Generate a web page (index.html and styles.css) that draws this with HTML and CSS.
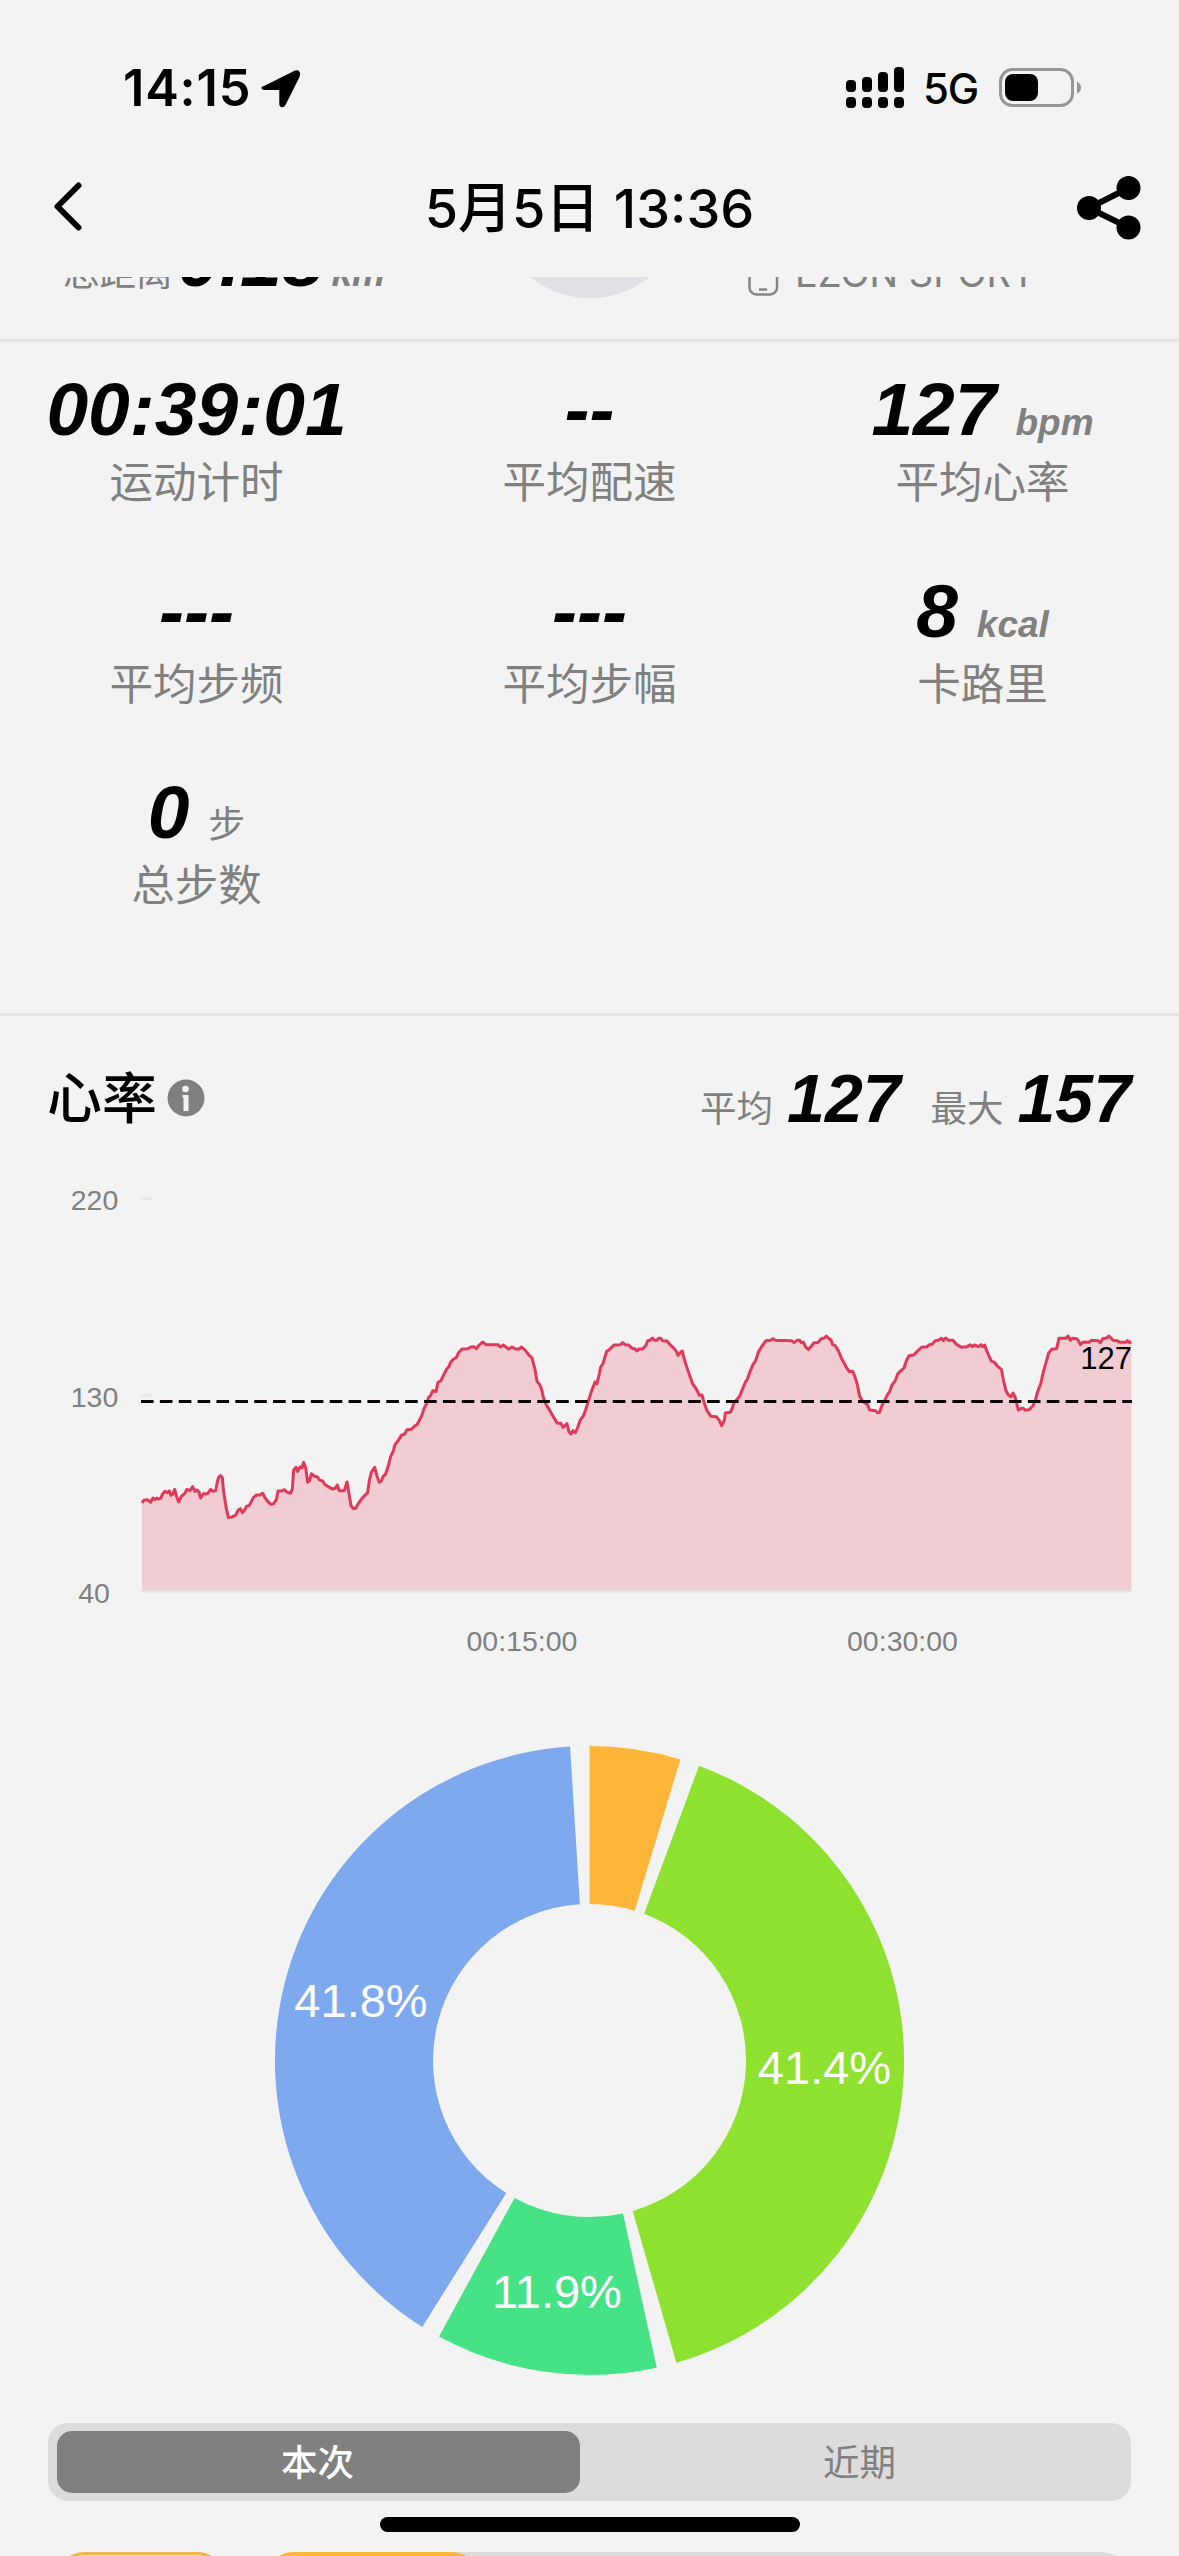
FILE: index.html
```html
<!DOCTYPE html>
<html lang="zh-CN">
<head>
<meta charset="utf-8">
<title>5月5日 13:36</title>
<link rel="stylesheet" href="styles.css">
</head>
<body>
<header class="status-bar">
  <span class="clock">14:15</span>
  <svg class="location" width="40" height="40" viewBox="0 0 40 40"><path d="M4 16.500 L34 1.500 Q38.800 0 39 5 Q39 7 38 9 L24.500 36 Q22.500 39.500 19.500 37.800 Q18.300 37 18.300 35 V21 H4 Q.5 21 .3 18.500 Q.3 17.500 4 16.500Z"/></svg>
  <svg class="signal" width="58" height="42" viewBox="0 0 58 42">
    <rect x="0" y="13" width="10" height="12" rx="4"/><rect x="16" y="10" width="10" height="15" rx="4"/><rect x="32" y="5" width="10" height="20" rx="4"/><rect x="48" y="0" width="10" height="25" rx="4"/>
    <rect x="0" y="30" width="10" height="11" rx="4"/><rect x="16" y="30" width="10" height="11" rx="4"/><rect x="32" y="30" width="10" height="11" rx="4"/><rect x="48" y="30" width="10" height="11" rx="4"/>
  </svg>
  <span class="network">5G</span>
  <svg class="battery" width="83" height="40" viewBox="0 0 83 40">
    <rect x="1.500" y="1.500" width="72" height="36" rx="12" fill="none" stroke="#969696" stroke-width="3"/>
    <rect x="6" y="6" width="33" height="27" rx="8"/>
    <path d="M78 13.500 Q82 15.500 82 19.500 T78 25.500Z" fill="#969696"/>
  </svg>
</header>
<nav class="nav-bar">
  <svg class="back" width="30" height="52" viewBox="0 0 30 52"><path d="M25.500 4.500 L4.500 25.500 L25.500 46.500" fill="none" stroke="#000" stroke-width="6" stroke-linecap="round" stroke-linejoin="round"/></svg>
  <h1 class="nav-title">5月5日 13:36</h1>
  <svg class="share" width="64" height="64" viewBox="0 0 64 64"><path d="M51.500 12 L12 32 L51.500 51.500" fill="none" stroke="#000" stroke-width="6"/><circle cx="12" cy="32" r="12"/><circle cx="51.500" cy="12" r="12"/><circle cx="51.500" cy="51.500" r="12"/></svg>
</nav>
<main class="content">
  <section class="summary">
    <div class="distance"><span class="cjk">总距离</span><b class="value">0.18</b><i class="unit">km</i></div>
    <div class="avatar"></div>
    <div class="device">
      <svg width="31" height="48" viewBox="0 0 31 48"><rect x="1.500" y="1.500" width="27.500" height="44" rx="7" fill="none" stroke="#868686" stroke-width="2.500"/><path d="M11 40.500 H19" stroke="#868686" stroke-width="2.500"/></svg>
      <span>EZON SPORT</span>
    </div>
  </section>
  <section class="stats">
    <div class="stat"><div class="figure"><b class="value">00:39:01</b></div><div class="label">运动计时</div></div>
    <div class="stat"><div class="figure"><b class="value">--</b></div><div class="label">平均配速</div></div>
    <div class="stat"><div class="figure"><b class="value">127</b><i class="unit">bpm</i></div><div class="label">平均心率</div></div>
    <div class="stat"><div class="figure"><b class="value">---</b></div><div class="label">平均步频</div></div>
    <div class="stat"><div class="figure"><b class="value">---</b></div><div class="label">平均步幅</div></div>
    <div class="stat"><div class="figure"><b class="value">8</b><i class="unit">kcal</i></div><div class="label">卡路里</div></div>
    <div class="stat"><div class="figure"><b class="value">0</b><span class="unit-cjk">步</span></div><div class="label">总步数</div></div>
  </section>
  <section class="heart">
    <div class="heart-head">
      <h2>心率</h2>
      <svg class="info" width="38" height="38" viewBox="0 0 38 38"><circle cx="19" cy="19" r="18.500" fill="#808080"/><circle cx="18.500" cy="10" r="3.300" fill="#f3f3f3"/><path d="M15.500 16 H21.500 V32 H16.500 V18.500 H15.500Z" fill="#f3f3f3"/></svg>
      <div class="heart-figures"><span>平均</span><b>127</b><span class="max">最大</span><b>157</b></div>
    </div>
    <svg class="trend" width="1179" height="562" viewBox="0 1138 1179 562">
      <path d="M141 1198.500 H153 M141 1395 H153" stroke="#e8e8e8" stroke-width="3"/>
      <path d="M141 1591.200 H1132" stroke="#e4e2e3" stroke-width="2.800"/>
      <g transform="translate(40 1280) scale(.33333)">
        <path id="area" class="area" d=""/>
        <path id="line" class="line" d=""/>
      </g>
      <path d="M141 1401.500 H1132" stroke="#0c0406" stroke-width="3" stroke-dasharray="12.600 6.270"/>
      <g class="axis">
        <text x="94.500" y="1209.500">220</text><text x="94.500" y="1406.500">130</text><text x="94" y="1603">40</text>
        <text x="522" y="1651">00:15:00</text><text x="902.500" y="1651">00:30:00</text>
      </g>
      <text class="average" x="1132" y="1369">127</text>
    </svg>
    <svg class="zones" width="1179" height="700" viewBox="0 1700 1179 700">
      <path fill="#ffb638" d="M589.500 1746 A314.500 314.500 0 0 1 680.400 1759.400 L634.700 1910.700 A156.500 156.500 0 0 0 589.500 1904Z"/>
      <path fill="#8ee12f" d="M699.100 1765.700 A314.500 314.500 0 0 1 676.400 2362.800 L632.700 2210.900 A156.500 156.500 0 0 0 644.100 1913.800Z"/>
      <path fill="#46e386" d="M656.800 2367.700 A314.500 314.500 0 0 1 439 2336.600 L514.600 2197.900 A156.500 156.500 0 0 0 623 2213.400Z"/>
      <path fill="#7fa9ee" d="M422.300 2326.900 A314.500 314.500 0 0 1 570.100 1746.600 L579.900 1904.300 A156.500 156.500 0 0 0 506.300 2193Z"/>
      <g class="share-label"><text x="361" y="2017">41.8%</text><text x="824.500" y="2084">41.4%</text><text x="557" y="2308">11.9%</text></g>
    </svg>
  </section>
  <div class="tabs"><span class="tab active">本次</span><span class="tab">近期</span></div>
  <div class="zone-row"><span class="chip"></span><span class="track"><span class="fill" style="width:25%"></span></span></div>
</main>
<div class="home-indicator"></div>
<script src="chart.js"></script>
</body>
</html>
```
FILE: styles.css
```css
* { box-sizing: border-box; }
body {
  position: relative;
  margin: 0;
  width: 1179px;
  height: 2556px;
  overflow: hidden;
  display: flex;
  flex-direction: column;
  background: #f3f3f3;
  color: #000;
  font-family: "Liberation Sans", "Noto Sans CJK SC", sans-serif;
}
h1, h2 { margin: 0; }
svg { display: block; flex: none; }

.status-bar {
  flex: none;
  height: 150px;
  padding: 58px 97px 0 123px;
  display: flex;
  align-items: flex-start;
  font-family: Inter, sans-serif;
}
.clock {
  width: 138px;
  line-height: 60px;
  font-size: 50.500px;
  font-weight: 600;
  letter-spacing: .8px;
}
.location { margin-top: 11px; }
.signal { margin: 9px 0 0 auto; }
.network {
  width: 73px;
  margin-left: 19px;
  line-height: 62px;
  font-size: 42px;
  font-weight: 500;
  letter-spacing: -1.300px;
  white-space: nowrap;
}
.battery { margin: 10px 0 0 3px; }

.nav-bar {
  flex: none;
  height: 127px;
  padding: 0 38px 0 53px;
  display: grid;
  grid-template-columns: 64px 1fr 64px;
  align-items: start;
}
.back { margin-top: 31px; }
.share { margin-top: 26px; }
.nav-title {
  margin: 24px 0 0 -15px;
  text-align: center;
  font: 500 54px/70px Inter, "Noto Sans CJK SC", sans-serif;
}

.content {
  flex: 1;
  min-height: 0;
  overflow: hidden;
}
.summary {
  height: 65px;
  overflow: hidden;
  border-bottom: 3px solid #e4e4e4;
  display: flex;
  align-items: flex-end;
}
.distance {
  width: 494px;
  padding: 0 0 41px 63px;
  flex: none;
  display: flex;
  align-items: baseline;
}
.cjk { color: #808080; font: 36.500px/54px "Noto Sans CJK SC", sans-serif; }
.distance .value { margin-left: 5px; }
.distance .unit { margin-left: 8px; }
.avatar {
  width: 192px;
  height: 192px;
  margin-bottom: 41px;
  flex: none;
  border-radius: 50%;
  background: #dfe1e6;
}
.device {
  padding: 0 0 42px 62px;
  display: flex;
  align-items: flex-end;
  color: #808080;
  font: 38px/48px Inter, sans-serif;
}
.device span { margin-left: 16px; white-space: nowrap; }
.value { font-size: 75px; line-height: 76px; font-style: italic; }
.unit { color: #808080; font-size: 37px; font-weight: 700; }
.unit-cjk { color: #808080; font-family: "Noto Sans CJK SC", sans-serif; font-size: 37px; line-height: 54px; }

.stats {
  height: 674px;
  padding-top: 29px;
  border-bottom: 3px solid #e4e4e4;
  display: grid;
  grid-template-columns: repeat(3, 1fr);
  grid-auto-rows: 201.5px;
}
.figure {
  height: 76px;
  display: flex;
  justify-content: center;
  align-items: baseline;
  gap: 19px;
}
.label {
  margin-top: 3px;
  text-align: center;
  color: #808080;
  font: 43.500px/60px "Noto Sans CJK SC", sans-serif;
}

.heart-head {
  height: 122px;
  padding: 42px 48px 0 47px;
  display: flex;
  align-items: flex-start;
}
.heart-head h2 { font: 500 55px/72px "Noto Sans CJK SC", sans-serif; }
.info { margin: 21px 0 0 10px; }
.heart-figures {
  margin-left: auto;
  display: flex;
  align-items: baseline;
}
.heart-figures span { color: #808080; font: 36.500px/54px "Noto Sans CJK SC", sans-serif; }
.heart-figures b { margin-left: 14px; font-size: 68px; line-height: 80px; font-style: italic; }
.heart-figures .max { margin-left: 30px; }

.area { fill: #f1ccd3; }
.line { fill: none; stroke: #e03a58; stroke-width: 9; stroke-linejoin: round; }
.axis { fill: #808080; font-size: 28.500px; text-anchor: middle; }
.average { font-size: 31px; text-anchor: end; }
.share-label { fill: #fff; font-size: 47px; text-anchor: middle; }

.tabs {
  height: 78px;
  margin: 23px 48px 0;
  padding: 8px 9px;
  display: grid;
  grid-template-columns: 523px 1fr;
  border-radius: 20px;
  background: #dcdcdc;
}
.tab {
  padding-left: 17px;
  text-align: center;
  border-radius: 15px;
  color: #808080;
  font: 36.500px/60px "Noto Sans CJK SC", sans-serif;
}
.tab.active { padding: 0 2px 0 0; color: #fff; background: #808080; font-weight: 500; }
.zone-row {
  margin: 51px 48px 0 55px;
  display: flex;
  gap: 37px;
}
.chip, .track, .fill { height: 60px; border-radius: 30px; }
.chip { width: 172px; border: 3px solid #f0b450; background: #ffe5b0; }
.track { flex: 1; background: #dcdcdc; }
.fill { display: block; background: #ffb638; }
.home-indicator {
  position: absolute;
  left: 380px;
  bottom: 24px;
  width: 420px;
  height: 15px;
  border-radius: 8px;
  background: #000;
}
```
FILE: chart.js
```js
// Heart-rate samples as x,y pairs in chart units
const samples = [
  306,668, 312,661, 322,659, 332,667, 339,654, 345,659, 350,654, 355,657, 362,655, 368,642, 375,634, 382,638, 388,633, 393,646, 398,643, 404,628, 410,650, 416,666, 424,649, 434,641, 441,628, 450,632, 458,620, 465,634, 470,630, 477,636, 482,654, 490,641, 503,641, 512,628, 519,634, 527,632, 532,606, 536,592, 541,587, 547,593, 550,628, 558,680, 565,712, 575,712, 588,704, 595,690, 601,686, 607,698, 613,691, 619,679, 628,676, 640,653, 650,645, 660,645, 668,640, 675,653, 683,664, 693,673, 701,671, 709,659, 714,633, 725,633, 733,629, 740,636, 752,640, 757,627, 761,570, 768,562, 773,574, 780,561, 786,563, 791,547, 797,563, 803,607, 809,601, 814,581, 822,588, 832,591, 840,601, 848,603, 854,613, 865,620, 877,627, 886,625, 892,615, 898,632, 913,632, 921,606, 927,640, 933,677, 940,686, 947,685, 956,669, 968,653, 983,638, 988,602, 994,577, 1004,562, 1011,588, 1018,607, 1024,603, 1030,588, 1036,584, 1045,558, 1052,530, 1060,513, 1065,494, 1076,480, 1084,466, 1094,462, 1101,449, 1115,448, 1124,438, 1131,434, 1144,410, 1152,386, 1160,370,
  1166,352, 1172,346, 1178,332, 1188,335, 1194,307, 1202,303, 1212,283, 1220,267, 1226,261, 1232,247, 1241,237, 1249,233, 1255,219, 1266,207, 1284,206, 1293,201, 1302,200, 1309,206, 1318,195, 1328,186, 1338,194, 1374,194, 1381,201, 1390,195, 1398,201, 1406,207, 1416,201, 1426,207, 1438,207, 1445,201, 1458,213, 1465,223, 1476,234, 1485,268, 1491,304, 1499,314, 1505,328, 1510,352, 1518,373, 1528,389, 1540,410, 1552,430, 1563,430, 1569,442, 1575,437, 1581,431, 1586,453, 1593,462, 1599,452, 1606,458, 1612,445, 1621,420, 1630,408, 1637,389, 1647,358, 1654,335, 1665,306, 1671,311, 1678,282, 1682,261, 1689,251, 1694,234, 1700,214, 1708,209, 1722,195, 1741,194, 1748,188, 1755,194, 1766,195, 1773,202, 1779,206, 1785,206, 1790,213, 1797,207, 1808,207, 1818,196, 1823,182, 1830,181, 1837,174, 1843,181, 1850,181, 1856,175, 1862,175, 1868,182, 1881,183, 1890,194, 1902,205, 1909,214, 1914,226, 1920,219, 1927,213, 1933,238, 1942,266, 1950,289, 1958,312, 1969,327, 1978,346, 1986,345, 1993,370, 2001,392, 2013,409, 2029,410, 2038,421, 2045,437, 2053,421, 2056,399, 2071,397, 2077,384, 2081,370, 2099,349, 2106,331, 2117,305, 2122,298, 2129,278, 2139,254, 2147,242, 2156,214, 2169,194, 2178,182, 2192,181, 2199,176, 2206,181,
  2255,182, 2262,188, 2271,181, 2279,181, 2284,188, 2291,187, 2297,201, 2305,208, 2313,200, 2322,188, 2333,188, 2344,176, 2353,174, 2359,168, 2365,174, 2373,180, 2378,194, 2386,197, 2396,214, 2405,236, 2413,250, 2419,262, 2428,275, 2438,274, 2444,288, 2452,314, 2459,349, 2470,366, 2482,373, 2489,390, 2506,392, 2513,398, 2519,397, 2526,376, 2533,363, 2543,343, 2549,335, 2556,315, 2566,302, 2573,282, 2583,272, 2592,264, 2599,243, 2607,227, 2621,225, 2634,212, 2645,202, 2662,200, 2668,194, 2676,193, 2686,182, 2697,180, 2704,175, 2710,181, 2717,174, 2726,181, 2739,181, 2749,193, 2765,202, 2780,200, 2790,194, 2797,200, 2803,195, 2815,200, 2823,194, 2828,200, 2834,195, 2840,212, 2847,228, 2854,243, 2863,247, 2873,259, 2884,268, 2891,304, 2898,332, 2905,345, 2913,350, 2919,339, 2926,353, 2935,390, 2944,385, 2950,385, 2957,391, 2969,388, 2979,377, 2986,362, 2993,335, 3003,308, 3010,276, 3019,244, 3026,219, 3036,207, 3050,206, 3057,175, 3078,175, 3084,168, 3091,181, 3097,175, 3110,176, 3117,185, 3121,194, 3129,186, 3147,187, 3154,181, 3174,182, 3181,188, 3188,176, 3200,174, 3207,168, 3213,174, 3219,181, 3231,182, 3240,187, 3258,187, 3262,182, 3268,188, 3274,185
];
let d = '';
for (let i = 0; i < samples.length; i += 2) d += `${i ? 'L' : 'M'}${samples[i]} ${samples[i + 1]}`;
document.getElementById('line').setAttribute('d', d);
document.getElementById('area').setAttribute('d', `${d}V930H306Z`);
```
